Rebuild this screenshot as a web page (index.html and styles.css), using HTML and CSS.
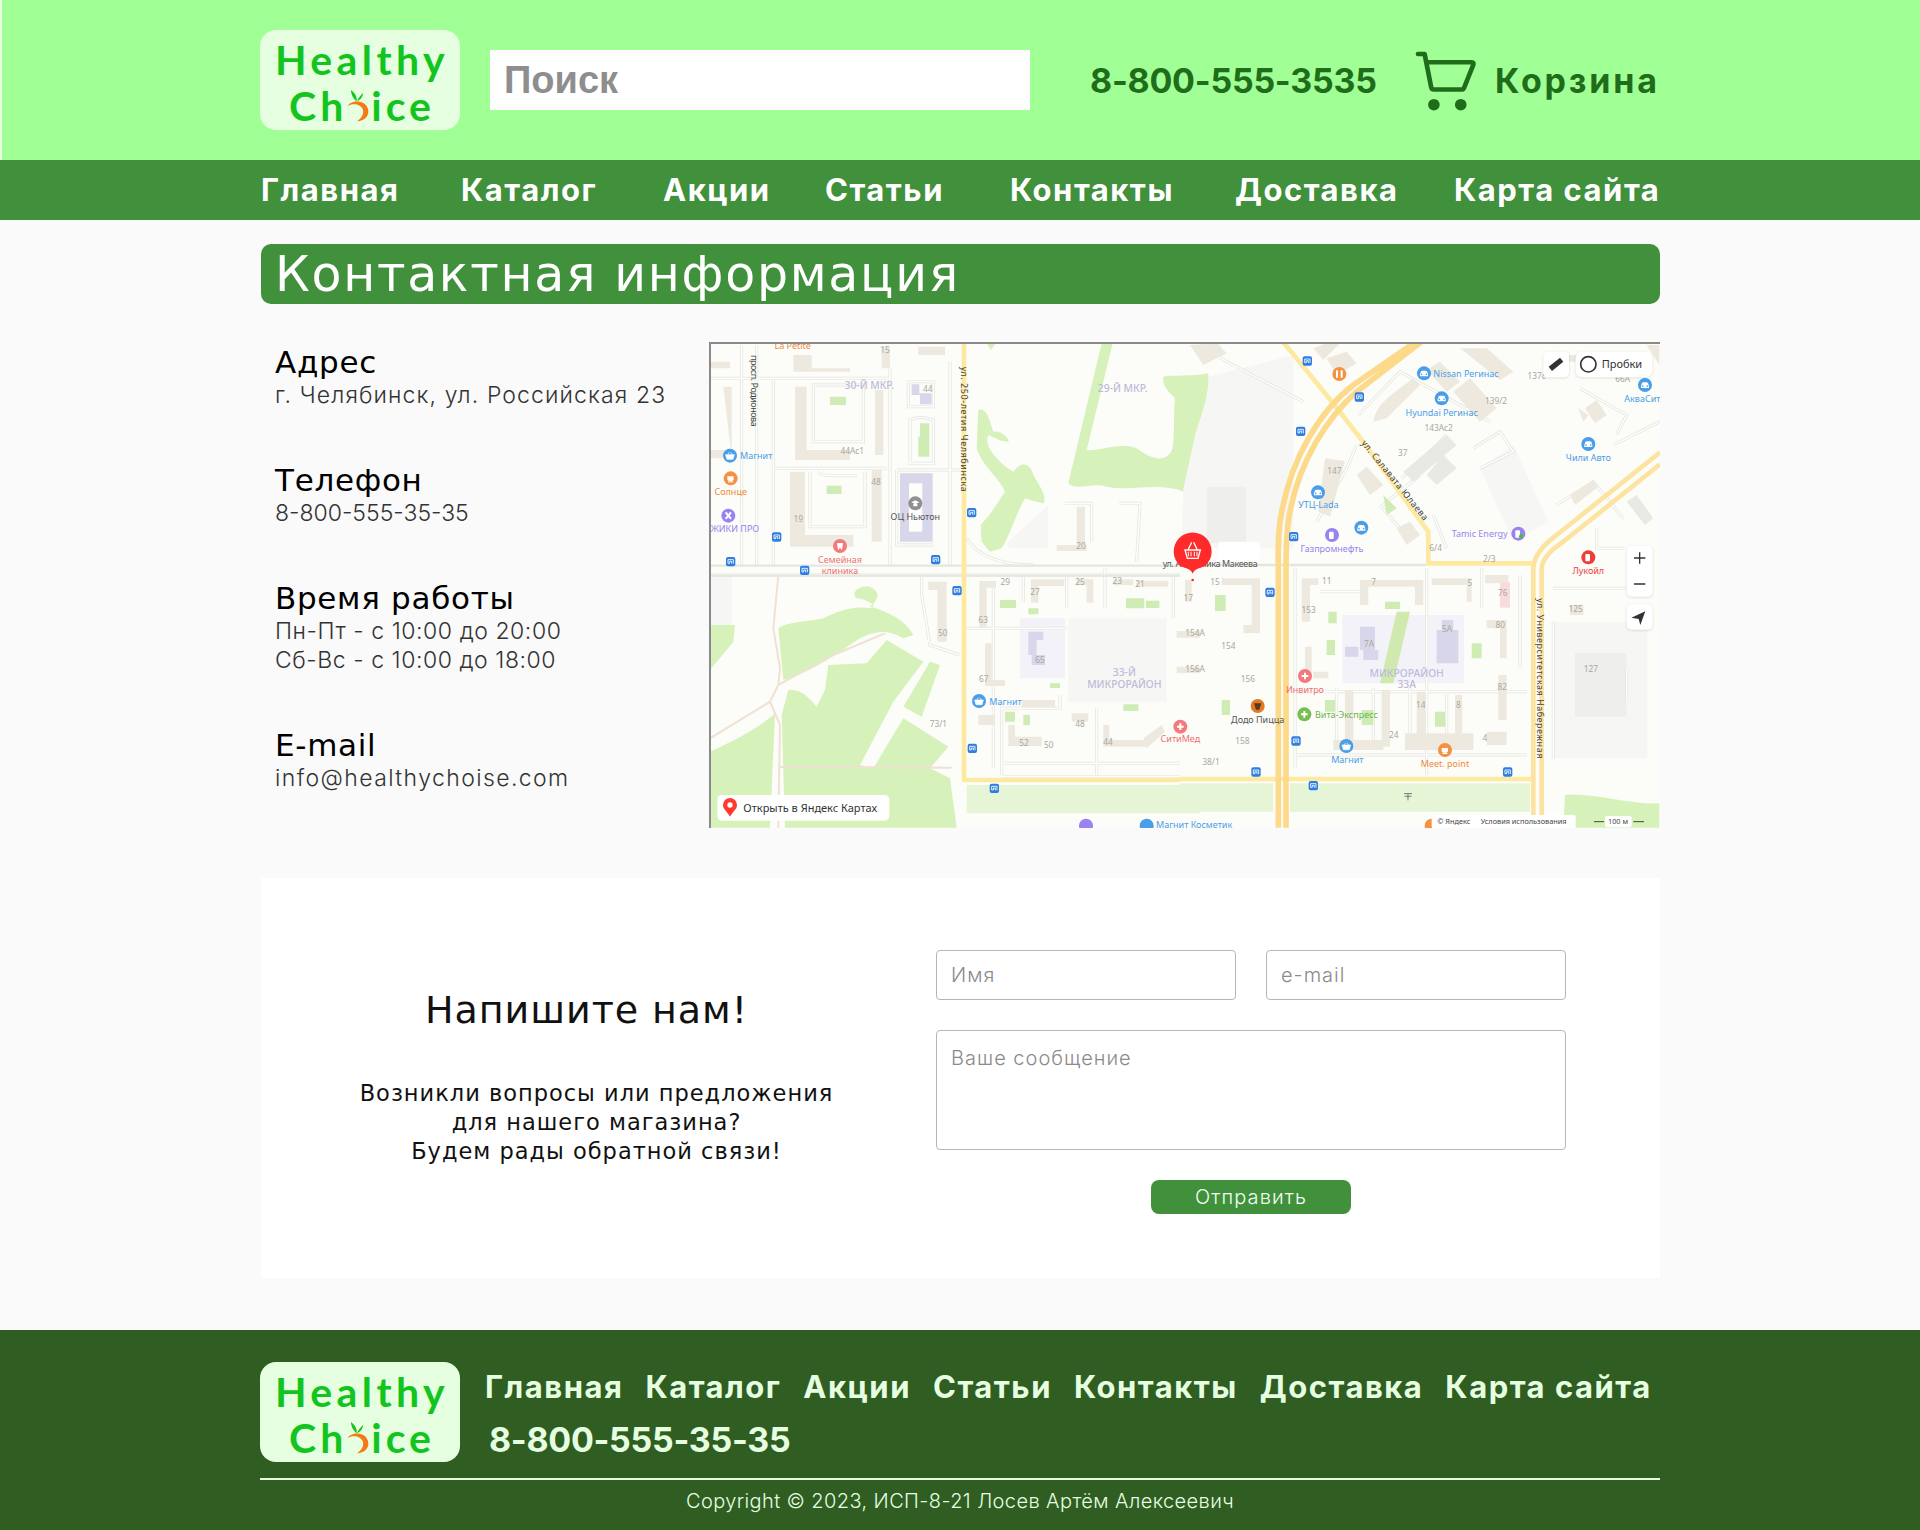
FILE: index.html
```html
<!DOCTYPE html>
<html lang="ru">
<head>
<meta charset="utf-8">
<title>Контактная информация</title>
<link rel="stylesheet" href="styles.css">
</head>
<body>
<header class="top">
  <div class="wrap top-row">
    <a class="logo"><span class="logo-line">Healthy</span><span class="logo-line logo-line2">Ch<svg class="carrot" viewBox="0 0 24 34"><path d="M5 1C5 6 8 10 10.500 12.500C11.500 8 9 4 5 1ZM17 4C15 6 12 9 11 12.500C14 11 17 8 17 4Z" fill="#14c41e"/><path d="M1.500 17C5 11 19 10 22 20C24 27 18 32 11 32.500C15 29 18 26 17 21C15 15 7 14 1.500 17Z" fill="#f47a16"/></svg>ice</span></a>
    <input class="search" type="text" placeholder="Поиск">
    <div class="top-phone">8-800-555-3535</div>
    <a class="cart">
      <svg class="cart-icon" viewBox="45 40 190 185"><path d="M54 54H74L94 155Q95 161 102 161H186Q191 161 193 156L221 86Q223 79 216 79H80" fill="none" stroke="#1f6d1a" stroke-width="14" stroke-linecap="round" stroke-linejoin="round"/><circle cx="102" cy="207" r="17.500" fill="#1f6d1a"/><circle cx="183" cy="207" r="17.500" fill="#1f6d1a"/></svg>
      <span class="cart-label">Корзина</span>
    </a>
  </div>
</header>
<nav class="nav">
  <div class="wrap nav-row">
    <a>Главная</a><a>Каталог</a><a>Акции</a><a>Статьи</a><a>Контакты</a><a>Доставка</a><a>Карта сайта</a>
  </div>
</nav>
<main class="wrap">
  <h1 class="title">Контактная информация</h1>
  <section class="contacts">
    <div class="info">
      <div class="info-block"><h3>Адрес</h3><p class="ls-addr">г. Челябинск, ул. Российская 23</p></div>
      <div class="info-block"><h3>Телефон</h3><p class="ls-tel">8-800-555-35-35</p></div>
      <div class="info-block"><h3>Время работы</h3><p class="ls-time">Пн-Пт - с 10:00 до 20:00</p><p class="ls-time">Сб-Вс - с 10:00 до 18:00</p></div>
      <div class="info-block"><h3>E-mail</h3><p class="ls-mail">info@healthychoise.com</p></div>
    </div>
    <div class="map">
      <svg class="map-svg" viewBox="711 344 949 484" preserveAspectRatio="xMinYMin slice">
        <defs>
          <path id="st3" d="M125 30V690M170 30V690M220 130V690M30 130H570M570 100V690M750 80V690M590 405H780M220 400H560M340 150V320H490V150ZM360 410Q350 420 400 422H470M330 410V575H495V410M30 720H1440M880 760V1300M970 720V800M1100 720V820M1215 700V820M1420 720V850M800 880H1100M905 1100V1320M905 1285H1440M910 1325H1440M1190 1120V1320M1080 1080V1120H905M665 720V780L690 930L780 960M800 610C830 660 900 690 1000 690M1095 505H1175V620M1258 505H1320L1310 680M625 140H700V215H625ZM590 405V630H700M630 255Q660 240 700 255V385H630Z"/>
          <path id="st4" d="M345 700V1300M420 770H540M740 700V1320M905 700V820M1020 720V1000M1120 760H1340M1120 860V1270M345 1070H1040M470 1060V1240M580 1060V1240M690 1060V1240M800 1070V1240M345 1260H1040M120 30Q100 60 140 80L370 200M530 330L500 400L410 560M535 240L660 110L930 260M665 430L800 300M880 340L960 290L1000 350L900 400M610 510L720 420M600 510L660 580M1130 510L1240 440L1330 550M1300 330L1440 260M1200 160L1340 240L1310 300M760 540L800 640M1250 580V640H1330M1340 1000V1100"/>
          <g id="tr"><rect x="-14" y="-14" width="28" height="28" rx="6" fill="#2e7de0"/><path d="M-8 -6H8M-8 -6V5H-3V-1H3V6M8 -6V6" fill="none" stroke="#fff" stroke-width="2.600"/></g>
          <g id="car"><path d="M-12 3L-9 -6Q-8 -8 -5 -8H5Q8 -8 9 -6L12 3V9H-12Z" fill="#fff"/><circle cx="-7" cy="3" r="2.500" fill="#4a9de8"/><circle cx="7" cy="3" r="2.500" fill="#4a9de8"/></g>
          <g id="bsk"><path d="M-13 -3H13L9 11H-9ZM-7 -3L-2 -10M7 -3L2 -10" fill="#fff" stroke="#fff" stroke-width="2"/></g>
          <g id="cup"><path d="M-10 -6H9V2Q9 8 0 8Q-10 8 -10 2Z" fill="#fff"/><rect x="-8" y="9" width="15" height="3" fill="#fff"/></g>
        </defs>
        <rect class="m-bg" x="700" y="335" width="970" height="500"/>
        <g transform="translate(700 335) scale(.33333)">
          <path class="m-gray" d="M30 720H95V870H30ZM925 620L1045 510V640H925ZM1105 850H1400V1100H1105Z"/>
          <path class="m-school" d="M960 850H1095V1030H960Z"/>
          <path class="m-park" d="M1205 25L1238 25L1160 345C1200 350 1260 320 1310 340C1350 370 1400 390 1418 340C1425 280 1420 240 1425 190C1405 170 1385 150 1390 125C1420 120 1480 125 1525 115C1530 200 1490 300 1470 400L1450 470C1380 440 1300 470 1220 455C1180 440 1130 470 1105 445ZM835 225C860 215 870 260 880 290C900 285 930 310 925 320C900 320 890 310 865 300C850 330 890 380 940 410C960 380 990 380 1000 420C1030 470 1040 490 1030 505C1000 500 980 490 975 490C950 530 930 600 905 640L870 650L845 620L842 570C880 530 900 490 915 470C900 430 850 400 830 340ZM860 25H888L872 45ZM235 880C260 860 330 860 370 850C410 830 460 810 510 820C540 820 500 790 470 790C450 770 480 750 510 755C540 770 540 790 510 815C570 830 620 860 640 900L610 910C560 880 520 890 480 910C420 950 340 1010 250 1035ZM385 990L500 985L560 915L670 980L580 1100L480 1290L520 1300L610 1150L745 1235L690 1300L750 1330L770 1478H255L245 1140L265 1065C300 1060 330 1090 350 1115L375 1065ZM690 980L720 990L665 1145L610 1115ZM30 870H105L100 920L30 1005ZM30 1250C100 1220 190 1170 225 1135L210 1478H30Z"/>
          <path class="m-strip" d="M800 1350H1500V1435H800Z"/>
          <path class="m-trail" d="M235 720L220 880L240 1000L235 1050L400 960L555 895M235 1050L210 1100L30 1210M210 1100L240 1170L235 1478M235 1295L755 1298"/>
          <use href="#st3" class="m-casing"/><use href="#st3" class="m-street"/>
          <path class="m-bld" d="M285 155H320V345H450V375H285ZM30 80H90V100H30ZM70 155H95V345H30V370H95ZM270 410H315V600H460V635H270ZM525 165H550V360H525ZM515 405H545V620H515ZM545 35H570V100H545ZM655 35H735V60H655ZM280 60H335V100H450V110H280ZM838 738H888V758H860V878H838ZM993 733H1093V753H1015V803H993ZM1130 733H1180V803H1160V751H1130ZM1240 733H1300V751H1240ZM1310 737H1405V755H1310ZM1455 735H1475V800H1455ZM855 925H875V1035H915V1053H855ZM1430 888H1500V908H1430ZM1430 995H1500V1015H1430ZM965 1095H1065V1117H965ZM835 1140H885V1170H835ZM925 1170H945V1205H1025V1233H925ZM1210 1170H1228V1215H1340V1235H1210ZM1330 1210L1385 1170L1395 1190L1340 1240ZM685 740H740V920H712V765H685ZM1130 515H1155V630H1160V648H1070V630H1130ZM1115 1135H1165V1160H1115Z"/>
          <path class="m-lav" d="M600 415H698V620H600ZM635 148H658V175H695V208H660V180H635ZM985 890H1030V915H1010V960H1035V990H995V960H985Z"/>
          <path class="m-white" d="M627 445H667V590H627Z"/>
          <path class="m-green" d="M390 185H438V210H390ZM380 452H425V477H380ZM660 265H688V365H655V305H660ZM900 795H948V819H900ZM985 820H1015V838H985ZM1278 790H1333V820H1278ZM1338 797H1378V819H1338ZM1050 1045H1080V1059H1050ZM1270 1108H1315V1128H1270ZM915 1130H945V1160H915ZM970 1140H990V1170H970Z"/>
          <path class="m-road-w" d="M30 692H1440M30 722H1440"/>
          <path class="m-road-l" d="M792 22V1335H1440"/>
        </g>
        <g transform="translate(1180 335) scale(.33333)">
          <path class="m-gray" d="M85 125L340 60V640H240C100 640 20 640 5 620L10 460L50 280ZM1120 860H1402V1270H1120ZM900 400L1000 330L1105 560L1000 620Z"/>
          <path class="m-gray2" d="M80 455H198V625H80ZM1185 955H1340V1145H1185Z"/>
          <path class="m-park" d="M0 130C30 125 70 115 85 130C85 200 50 280 30 340L10 460L0 465ZM1155 1380C1230 1370 1350 1410 1438 1405V1478H1150Z"/>
          <path class="m-strip" d="M0 1345H280V1430H0ZM330 1345H1050V1430H330Z"/>
          <path class="m-school" d="M487 840H852V1045H487Z"/>
          <use href="#st4" class="m-casing"/><use href="#st4" class="m-street"/>
          <path class="m-lav" d="M540 875H585V945H595V975H550V945H540ZM495 935H535V965H495ZM785 855H820V885H835V985H770V885H785Z"/>
          <path class="m-bld" d="M365 730H415V750H390V860H365ZM540 735H730V810H705V755H565V810H540ZM755 730H875V800H860V750H755ZM915 720H985V745H915ZM125 730H240V895H190V870H215V750H125ZM920 855H980V970H960V880H920ZM955 1020H980V1155H955ZM920 1190H980V1230H920ZM495 1065H520V1235H495ZM605 1065H630V1235H605ZM710 1070H735V1240H710ZM825 1080H847V1220H825ZM375 935H395V1025H375ZM460 1215H610V1245H460ZM675 1195H880V1245H675ZM400 1010H445V1030H400ZM435 370L495 378L450 545L415 530ZM580 260C590 200 650 170 700 130L720 150L620 250ZM740 105L780 80L840 140L800 170ZM820 170L870 130L950 220L900 260ZM530 420L560 395L610 450L570 480ZM650 580L690 560L720 600L680 630ZM1170 480L1240 435L1255 455L1185 510ZM1215 220L1250 195L1280 240L1245 265ZM1195 220L1225 240L1210 260ZM30 30L110 25L140 55L70 90ZM400 40L440 25H480L430 75ZM440 70L500 50L530 85L470 120ZM840 40H920L1000 110L960 135ZM1400 30H1438V90ZM1170 840H1210V810H1170Z"/>
          <path class="m-bld2" d="M670 410L800 300L830 330L700 440ZM740 420L790 360L830 400L770 450ZM1160 60H1200V80H1160ZM1340 500L1370 480L1420 550L1395 570Z"/>
          <path class="m-pink" d="M960 742H990V818H960Z"/>
          <path class="m-green" d="M105 780H137V828H105ZM445 830H470V865H445ZM440 915H465V960H440ZM875 925H905V970H875ZM125 1095H150V1140H125ZM435 1095H465V1130H435ZM765 1130H795V1175H765ZM615 800H660V822H615ZM545 1125H580V1170H545ZM610 480L650 520L620 540Z"/>
          <path class="m-diag" d="M650 830H690L640 1045H600Z"/>
          <path class="m-road-w" d="M0 690H740"/>
          <path class="m-road-l" d="M310 22C400 130 480 230 545 315L745 590V685H1060M0 1332H1060"/>
          <path class="m-road" d="M705 22L520 150C430 220 330 360 300 560Q293 620 295 700V1478M722 22L530 170C450 240 350 380 325 560Q318 620 318 700V1478"/>
          <path class="m-road-m" d="M1440 352L1130 600Q1062 650 1060 700V1478M1440 388L1150 620Q1088 660 1085 700V1478"/>
        </g>
        <g transform="translate(700 335) scale(.33333)">
          <text class="mt rd" transform="translate(783 95) rotate(90)" textLength="375">ул. 250-летия Челябинска</text>
          <text class="mt rd" transform="translate(153 60) rotate(90)" textLength="215">просп. Родионова</text>
          <text class="mt dark st" x="1388" y="697" textLength="285">ул. Академика Макеева</text>
          <g class="mt num">
            <text x="555" y="55">15</text><text x="683" y="170">44</text><text x="457" y="357">44Ac1</text><text x="528" y="450">48</text><text x="295" y="560">19</text><text x="1143" y="643">20</text><text x="916" y="750">29</text><text x="1005" y="780">27</text><text x="1140" y="750">25</text><text x="1252" y="747">23</text><text x="1320" y="755">21</text><text x="1465" y="798">17</text><text x="850" y="864">63</text><text x="728" y="903">50</text><text x="1020" y="985">65</text><text x="851" y="1040">67</text><text x="715" y="1175">73/1</text><text x="1140" y="1176">48</text><text x="972" y="1232">52</text><text x="1046" y="1238">50</text><text x="1224" y="1229">44</text>
          </g>
          <g class="mt lavt"><text x="508" y="163">30-Й МКР.</text><text x="1268" y="170">29-Й МКР.</text><text x="1273" y="1022">33-Й</text><text x="1273" y="1058">МИКРОРАЙОН</text></g>
          <use href="#tr" x="230" y="606"/><use href="#tr" x="92" y="680"/><use href="#tr" x="314" y="706"/><use href="#tr" x="707" y="674"/><use href="#tr" x="771" y="767"/><use href="#tr" x="815" y="533"/><use href="#tr" x="817" y="1240"/><use href="#tr" x="883" y="1360"/>
          <circle class="c-blue" cx="90" cy="362" r="21"/><use href="#bsk" x="90" y="362"/><text class="mt blue st" x="120" y="372">Магнит</text>
          <circle class="c-orange" cx="92" cy="430" r="21"/><use href="#cup" x="92" y="430"/><text class="mt orange" x="92" y="480">Солнце</text>
          <circle class="c-purple" cx="85" cy="542" r="21"/><path class="i-w" d="M77 532L93 552M93 532L77 552"/><text class="mt purple st" x="32" y="590">ЖИКИ ПРО</text>
          <circle class="c-red" cx="420" cy="633" r="21"/><path d="M411 624H429L426 646L420 638L414 646Z" fill="#fff"/><text class="mt red" x="420" y="685">Семейная</text><text class="mt red" x="420" y="716">клиника</text>
          <circle class="c-gray" cx="646" cy="505" r="21"/><path d="M634 502L646 496L658 502L646 508ZM640 507H652V514H640Z" fill="#fff"/><text class="mt dark" x="646" y="555">ОЦ Ньютон</text>
          <circle class="c-blue" cx="837" cy="1098" r="21"/><use href="#bsk" x="837" y="1098"/><text class="mt blue st" x="868" y="1110">Магнит</text>
          <circle class="c-red" cx="1441" cy="1175" r="21"/><path class="i-w" d="M1431 1175H1451M1441 1165V1185"/><text class="mt red" x="1441" y="1222">СитиМед</text>
          <circle class="c-blue" cx="1340" cy="1472" r="21"/><text class="mt blue st" x="1368" y="1480">Магнит Косметик</text>
          <circle class="c-purple" cx="1158" cy="1472" r="21"/>
          <text class="mt orange" x="278" y="41">La Petite</text>
        </g>
        <g transform="translate(1180 335) scale(.33333)">
          <text class="mt rd" transform="translate(1072 790) rotate(90)" textLength="480">ул. Университетская Набережная</text>
          <text class="mt rd" transform="translate(543 325) rotate(51)" textLength="300">ул. Салавата Юлаева</text>
          <g class="mt num">
            <text x="45" y="903">154A</text><text x="45" y="1010">156A</text><text x="145" y="943">154</text><text x="204" y="1041">156</text><text x="187" y="1228">158</text><text x="93" y="1290">38/1</text><text x="105" y="749">15</text><text x="440" y="748">11</text><text x="386" y="835">153</text><text x="463" y="417">147</text><text x="668" y="363">37</text><text x="581" y="750">7</text><text x="870" y="754">5</text><text x="968" y="782">76</text><text x="767" y="648">6/4</text><text x="928" y="680">2/3</text><text x="1070" y="132">137c</text><text x="948" y="206">139/2</text><text x="776" y="289">143Ac2</text><text x="1328" y="141">66A</text><text x="1187" y="831">125</text><text x="1233" y="1010">127</text><text x="961" y="879">80</text><text x="967" y="1065">82</text><text x="722" y="1118">14</text><text x="835" y="1118">8</text><text x="915" y="1217">4</text><text x="641" y="1209">24</text><text x="801" y="891">5A</text><text x="567" y="937">7A</text>
          </g>
          <g class="mt lavt"><text x="680" y="1025">МИКРОРАЙОН</text><text x="680" y="1060">33А</text></g>
          <use href="#tr" x="382" y="78"/><use href="#tr" x="538" y="186"/><use href="#tr" x="362" y="289"/><use href="#tr" x="341" y="605"/><use href="#tr" x="270" y="772"/><use href="#tr" x="348" y="1218"/><use href="#tr" x="228" y="1311"/><use href="#tr" x="400" y="1352"/><use href="#tr" x="983" y="1311"/>
          <circle class="c-orange" cx="478" cy="117" r="21"/><path class="i-w" d="M471 106V128M485 106V128"/>
          <circle class="c-blue" cx="732" cy="115" r="21"/><use href="#car" x="732" y="115"/><text class="mt blue st" x="760" y="125">Nissan Регинас</text>
          <circle class="c-blue" cx="785" cy="190" r="21"/><use href="#car" x="785" y="190"/><text class="mt blue" x="785" y="242">Hyundai Регинас</text>
          <circle class="c-blue" cx="1395" cy="150" r="21"/><use href="#car" x="1395" y="150"/><text class="mt blue st" x="1333" y="200">АкваСити</text>
          <circle class="c-blue" cx="1225" cy="327" r="21"/><use href="#car" x="1225" y="327"/><text class="mt blue" x="1225" y="377">Чили Авто</text>
          <circle class="c-blue" cx="414" cy="472" r="21"/><use href="#car" x="414" y="472"/><text class="mt blue" x="415" y="520">УТЦ-Lada</text>
          <circle class="c-blue" cx="544" cy="578" r="21"/><use href="#car" x="544" y="578"/>
          <circle class="c-purple" cx="456" cy="600" r="21"/><rect x="447" y="590" width="14" height="22" rx="3" fill="#fff"/><text class="mt purple" x="456" y="652">Газпромнефть</text>
          <text class="mt purple st" x="815" y="607">Tamic Energy</text><circle class="c-purple" cx="1015" cy="596" r="21"/><rect x="1006" y="586" width="14" height="22" rx="3" fill="#fff"/><circle cx="1023" cy="604" r="6" fill="#35c435"/>
          <circle class="c-strong" cx="1225" cy="667" r="21"/><rect x="1216" y="657" width="14" height="22" rx="3" fill="#fff"/><text class="mt strong" x="1225" y="717">Лукойл</text>
          <circle class="c-red" cx="375" cy="1023" r="21"/><path class="i-w" d="M365 1023H385M375 1013V1033"/><text class="mt red" x="375" y="1074">Инвитро</text>
          <circle class="c-green" cx="373" cy="1138" r="21"/><path class="i-w" d="M363 1138H383M373 1128V1148"/><text class="mt greent st" x="405" y="1150">Вита-Экспресс</text>
          <circle class="c-brown" cx="233" cy="1113" r="21"/><path d="M222 1105L244 1105L238 1124H228Z" fill="#5a3a20"/><text class="mt dark" x="233" y="1164">Додо Пицца</text>
          <circle class="c-blue" cx="499" cy="1233" r="21"/><use href="#bsk" x="499" y="1233"/><text class="mt blue" x="502" y="1283">Магнит</text>
          <circle class="c-orange" cx="795" cy="1245" r="21"/><use href="#cup" x="795" y="1245"/><text class="mt orange" x="795" y="1295">Meet. point</text>
          <path d="M672 1376H696M684 1376V1396M674 1384H694" stroke="#777" stroke-width="3" fill="none"/>
          <circle class="c-orange" cx="755" cy="1472" r="21"/>
          <rect class="m-pillw" x="755" y="1440" width="432" height="40" rx="6"/>
          <text class="mt bar" x="772" y="1467">© Яндекс</text><text class="mt bar" x="902" y="1467">Условия использования</text>
          <path d="M1242 1460H1272M1360 1460H1392" stroke="#444" stroke-width="3"/><rect class="m-pillw" x="1275" y="1443" width="80" height="34" rx="6"/><text class="mt bar" x="1284" y="1467">100 м</text>
          <rect class="m-pillw" x="115" y="620" width="125" height="55" rx="10"/>
          <path d="M38 716C32 700 20 702 0 692A57 57 0 1 1 76 692C56 702 44 700 38 716Z" fill="#ff2b2b"/>
          <circle cx="38" cy="735" r="4" fill="#ff2b2b"/>
          <path d="M15 645H61L54 670H22ZM25 643L35 622M51 643L41 622" fill="none" stroke="#fff" stroke-width="4"/><path d="M25 650V664M33 650V664M43 650V664M51 650V664" stroke="#fff" stroke-width="3"/>
          <g class="m-ctl">
            <rect x="1090" y="50" width="77" height="77" rx="14"/><rect x="1187" y="50" width="230" height="77" rx="18"/><rect x="1340" y="632" width="78" height="153" rx="14"/><rect x="1340" y="808" width="78" height="76" rx="14"/>
          </g>
          <path d="M1106 95L1140 68L1150 80L1116 108Z" fill="#333"/>
          <circle cx="1225" cy="88" r="23" fill="none" stroke="#333" stroke-width="5"/>
          <text class="mt ctl-t" x="1265" y="100">Пробки</text>
          <path d="M1379 652V686M1362 669H1396M1362 747H1396" stroke="#333" stroke-width="4" fill="none"/>
          <path d="M1396 829L1354 848L1376 852L1381 870Z" fill="#333"/>
        </g>
        <g transform="translate(700 335) scale(.33333)">
          <rect class="m-pillw" x="52" y="1380" width="516" height="77" rx="14"/>
          <path d="M90 1445C80 1428 69 1422 69 1410A21 21 0 1 1 111 1410C111 1422 100 1428 90 1445Z" fill="#ff3b30"/><circle cx="90" cy="1410" r="8" fill="#fff"/>
          <text class="mt ctl-t" x="130" y="1430">Открыть в Яндекс Картах</text>
        </g>
      </svg>
    </div>
  </section>
  <section class="feedback">
    <div class="feedback-text">
      <h2>Напишите нам!</h2>
      <p>Возникли вопросы или предложения</p>
      <p>для нашего магазина?</p>
      <p>Будем рады обратной связи!</p>
    </div>
    <form class="feedback-form">
      <div class="form-row">
        <input class="field" type="text" placeholder="Имя">
        <input class="field" type="text" placeholder="e-mail">
      </div>
      <textarea class="field message" placeholder="Ваше сообщение"></textarea>
      <button class="send" type="button">Отправить</button>
    </form>
  </section>
</main>
<footer class="footer">
  <div class="wrap">
    <div class="foot-row">
      <a class="logo"><span class="logo-line">Healthy</span><span class="logo-line logo-line2">Ch<svg class="carrot" viewBox="0 0 24 34"><path d="M5 1C5 6 8 10 10.500 12.500C11.500 8 9 4 5 1ZM17 4C15 6 12 9 11 12.500C14 11 17 8 17 4Z" fill="#14c41e"/><path d="M1.500 17C5 11 19 10 22 20C24 27 18 32 11 32.500C15 29 18 26 17 21C15 15 7 14 1.500 17Z" fill="#f47a16"/></svg>ice</span></a>
      <div class="foot-main">
        <div class="foot-nav"><a>Главная</a><a>Каталог</a><a>Акции</a><a>Статьи</a><a>Контакты</a><a>Доставка</a><a>Карта сайта</a></div>
        <div class="foot-phone">8-800-555-35-35</div>
      </div>
    </div>
    <div class="copyright">Copyright © 2023, ИСП-8-21 Лосев Артём Алексеевич</div>
  </div>
</footer>
</body>
</html>
```
FILE: styles.css
```css
* { box-sizing: border-box; }
html, body { margin: 0; padding: 0; }
body { background: #fafafa; font-family: Inter, "Noto Sans", sans-serif; color: #000; height: 1530px; overflow: hidden; }
h1, h2, h3, p { margin: 0; font-weight: 400; }
.wrap { width: 1400px; margin: 0 auto; }

.top { height: 160px; background: #a0ff95; box-shadow: inset 2px 0 0 #e5ffe0; }
.top-row { height: 160px; display: flex; align-items: center; }
.logo { display: flex; flex-direction: column; align-items: center; width: 200px; height: 100px; flex: none; background: #e5ffe0; border-radius: 16px; padding: 7px 0 0 4px; color: #14c41e; font-family: Lato, sans-serif; font-weight: 700; font-size: 41px; line-height: 46px; letter-spacing: 4.400px; }
.logo-line { display: block; white-space: nowrap; }
.logo-line2 { letter-spacing: 4px; }
.carrot { width: 24px; height: 34px; vertical-align: -2px; margin: 0 1px 0 -1px; }
.search { margin-left: 30px; width: 540px; height: 60px; flex: none; border: 0; background: #fff; padding: 0 14px; font-family: "Liberation Sans", Arial, sans-serif; font-weight: 700; font-size: 38px; outline: none; }
.search::placeholder { color: #8e8e8e; opacity: 1; }
.top-phone { flex: none; margin-left: 60px; font-size: 34px; font-weight: 700; letter-spacing: -.25px; color: #1f6d1a; white-space: nowrap; width: 325px; }
.cart { flex: none; display: flex; align-items: center; color: #1f6d1a; }
.cart-icon { width: 63px; height: 62px; flex: none; }
.cart-label { margin-left: 17px; font-size: 34px; font-weight: 700; letter-spacing: 2.800px; white-space: nowrap; }

.nav { height: 60px; background: #40903c; }
.nav-row { height: 60px; display: grid; grid-template-columns: 200px 202px 162px 185px 225px 219px 1fr; align-items: center; padding: 0 0 2px 1px; color: #fff; font-size: 31px; font-weight: 700; letter-spacing: 1.500px; white-space: nowrap; }

.title { margin: 24px 0 0 1px; height: 60px; background: #40903c; border-radius: 10px; color: #fff; font-family: "DejaVu Sans", sans-serif; font-size: 49px; line-height: 62px; padding-left: 14px; letter-spacing: 1.700px; white-space: nowrap; overflow: hidden; }

.contacts { margin-top: 38px; display: flex; height: 486px; }
.info { width: 449px; flex: none; padding: 1px 0 0 15px; display: flex; flex-direction: column; gap: 51px; }
.info-block h3 { font-family: "DejaVu Sans", sans-serif; font-size: 31px; line-height: 37px; padding-top: 1px; letter-spacing: .7px; white-space: nowrap; }
.info-block p { font-size: 23px; line-height: 29px; font-weight: 300; color: #333; white-space: nowrap; }
.ls-addr { letter-spacing: 1.100px; }
.ls-tel { letter-spacing: 0; }
.ls-time { letter-spacing: .55px; }
.ls-mail { letter-spacing: 1.400px; }

.map { width: 951px; height: 486px; border-top: 2px solid #8a8a8a; border-left: 2px solid #8a8a8a; overflow: hidden; background: #fcfcf8; }
.map-svg { display: block; width: 949px; height: 484px; }
.m-bg { fill: #fcfcf8; }
.m-gray { fill: #f6f6f4; }
.m-gray2 { fill: #eeeeec; }
.m-school { fill: #f3f2f9; }
.m-park { fill: #d6f1b9; }
.m-strip { fill: #e6f5d6; }
.m-trail { fill: none; stroke: #efe1d3; stroke-width: 6; }
.m-casing { fill: none; stroke: #e3e3dd; stroke-width: 9; }
.m-street { fill: none; stroke: #fdfdfb; stroke-width: 5; }
.m-bld { fill: #eee9de; }
.m-bld2 { fill: #e8e8e5; }
.m-lav { fill: #d8d6ea; }
.m-white { fill: #fdfdfb; }
.m-pink { fill: #fadbdb; }
.m-green { fill: #cfecb5; }
.m-diag { fill: #cfe9ae; }
.m-road-w { fill: none; stroke: #e6e6e1; stroke-width: 7; }
.m-road-l { fill: none; stroke: #fde9a0; stroke-width: 14; stroke-linejoin: round; }
.m-road { fill: none; stroke: #fdd98a; stroke-width: 17; }
.m-road-m { fill: none; stroke: #fde3a0; stroke-width: 14; }
.mt { font-family: "Noto Sans", sans-serif; font-size: 27px; text-anchor: middle; }
.st { text-anchor: start; }
.rd { text-anchor: start; fill: #444; }
.num { fill: #a9a79f; font-size: 25px; }
.lavt { fill: #bdbbd9; font-size: 31px; font-weight: 500; }
.blue { fill: #4a9de8; }
.orange { fill: #ee8a3a; }
.purple { fill: #9a82f0; }
.red { fill: #ef6f70; }
.strong { fill: #f0413c; }
.greent { fill: #6cb34a; }
.dark { fill: #555; }
.bar { fill: #444; font-size: 22px; text-anchor: start; }
.ctl-t { fill: #333; font-size: 33px; text-anchor: start; }
.c-blue { fill: #4a9de8; }
.c-orange { fill: #f5913f; }
.c-purple { fill: #9a82f0; }
.c-red { fill: #f27a7c; }
.c-strong { fill: #f23c36; }
.c-green { fill: #78bd4f; }
.c-gray { fill: #909090; }
.c-brown { fill: #e07a26; }
.i-w { fill: none; stroke: #fff; stroke-width: 6; }
.m-pillw { fill: #fff; }
.m-ctl rect { fill: #fff; filter: drop-shadow(0 2px 3px rgba(0, 0, 0, .14)); }

.feedback { margin: 50px 0 0 1px; height: 400px; background: #fff; display: grid; grid-template-columns: 675px 1fr; padding-top: 72px; }
.feedback-text { text-align: center; padding-top: 37px; padding-right: 4px; font-family: "DejaVu Sans", sans-serif; color: #111; }
.feedback-text h2 { font-size: 38px; line-height: 46px; margin: 0 20px 46px 0; letter-spacing: .95px; }
.feedback-text p { font-size: 22.500px; line-height: 29px; letter-spacing: 1px; }
.feedback-form { display: flex; flex-direction: column; width: 630px; }
.form-row { display: flex; gap: 30px; }
.field { width: 300px; height: 50px; border: 1px solid #b5b5b5; border-radius: 4px; background: #fff; padding: 0 14px; font-family: Inter, sans-serif; font-weight: 300; font-size: 20px; letter-spacing: 1px; outline: none; flex: none; }
.field::placeholder { color: #8a8a8a; opacity: 1; }
.message { margin-top: 30px; width: 630px; height: 120px; padding-top: 15px; resize: none; }
.send { margin: 30px auto 0; width: 200px; height: 34px; border: 0; border-radius: 8px; background: #40903c; color: #f4fff2; font-family: Inter, sans-serif; font-weight: 300; font-size: 20px; padding: 0; letter-spacing: 1.100px; }

.footer { margin-top: 52px; height: 200px; background: #2f5d22; padding-top: 32px; color: #e5ffe0; }
.foot-row { display: flex; height: 118px; border-bottom: 2px solid #e5ffe0; }
.foot-main { margin-left: 25px; padding-top: 3px; }
.foot-nav { display: flex; gap: 22px; font-size: 31px; font-weight: 700; letter-spacing: 1.500px; line-height: 44px; white-space: nowrap; }
.foot-phone { margin: 9px 0 0 4px; font-size: 34px; font-weight: 700; letter-spacing: -.3px; line-height: 44px; white-space: nowrap; }
.copyright { text-align: center; font-size: 20px; font-weight: 300; letter-spacing: .4px; line-height: 24px; margin-top: 9px; }
```
